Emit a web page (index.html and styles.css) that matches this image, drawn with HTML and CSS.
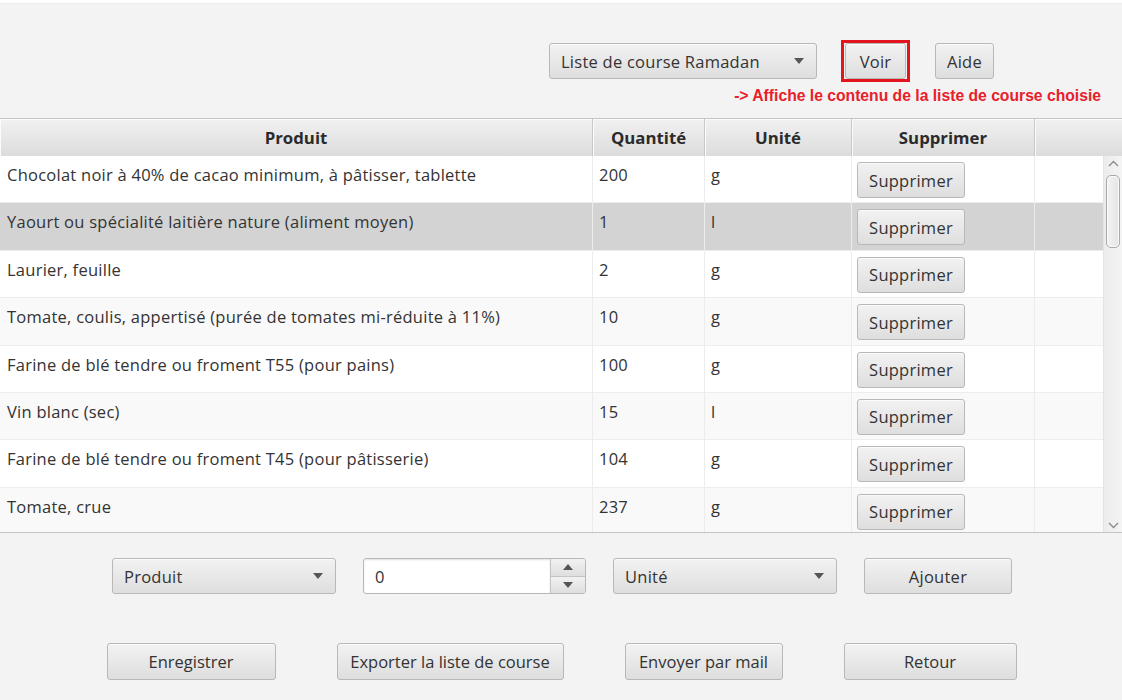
FILE: index.html
```html
<!DOCTYPE html>
<html lang="fr">
<head>
<meta charset="utf-8">
<title>Liste de course</title>
<link rel="stylesheet" href="styles.css">
</head>
<body>
<div class="app">
  <header class="top">
    <div class="top-controls">
      <div class="combo combo-liste"><span class="combo-label">Liste de course Ramadan</span><span class="arrow"></span></div>
      <div class="highlight"><button class="btn btn-voir">Voir</button></div>
      <button class="btn btn-aide">Aide</button>
    </div>
    <div class="hint">-&gt; Affiche le contenu de la liste de course choisie</div>
  </header>

  <section class="table">
    <div class="thead">
      <div class="th c-prod">Produit</div>
      <div class="th c-qty">Quantité</div>
      <div class="th c-unit">Unité</div>
      <div class="th c-del">Supprimer</div>
      <div class="th c-fill"></div>
    </div>
    <div class="tbody">
      <div class="rows">
        <div class="row">
          <div class="td c-prod">Chocolat noir à 40% de cacao minimum, à pâtisser, tablette</div>
          <div class="td c-qty">200</div>
          <div class="td c-unit">g</div>
          <div class="td c-del"><button class="btn btn-del">Supprimer</button></div>
          <div class="td c-fill2"></div>
        </div>
        <div class="row selected">
          <div class="td c-prod">Yaourt ou spécialité laitière nature (aliment moyen)</div>
          <div class="td c-qty">1</div>
          <div class="td c-unit">l</div>
          <div class="td c-del"><button class="btn btn-del">Supprimer</button></div>
          <div class="td c-fill2"></div>
        </div>
        <div class="row">
          <div class="td c-prod">Laurier, feuille</div>
          <div class="td c-qty">2</div>
          <div class="td c-unit">g</div>
          <div class="td c-del"><button class="btn btn-del">Supprimer</button></div>
          <div class="td c-fill2"></div>
        </div>
        <div class="row odd">
          <div class="td c-prod">Tomate, coulis, appertisé (purée de tomates mi-réduite à 11%)</div>
          <div class="td c-qty">10</div>
          <div class="td c-unit">g</div>
          <div class="td c-del"><button class="btn btn-del">Supprimer</button></div>
          <div class="td c-fill2"></div>
        </div>
        <div class="row">
          <div class="td c-prod">Farine de blé tendre ou froment T55 (pour pains)</div>
          <div class="td c-qty">100</div>
          <div class="td c-unit">g</div>
          <div class="td c-del"><button class="btn btn-del">Supprimer</button></div>
          <div class="td c-fill2"></div>
        </div>
        <div class="row odd">
          <div class="td c-prod">Vin blanc (sec)</div>
          <div class="td c-qty">15</div>
          <div class="td c-unit">l</div>
          <div class="td c-del"><button class="btn btn-del">Supprimer</button></div>
          <div class="td c-fill2"></div>
        </div>
        <div class="row">
          <div class="td c-prod">Farine de blé tendre ou froment T45 (pour pâtisserie)</div>
          <div class="td c-qty">104</div>
          <div class="td c-unit">g</div>
          <div class="td c-del"><button class="btn btn-del">Supprimer</button></div>
          <div class="td c-fill2"></div>
        </div>
        <div class="row odd">
          <div class="td c-prod">Tomate, crue</div>
          <div class="td c-qty">237</div>
          <div class="td c-unit">g</div>
          <div class="td c-del"><button class="btn btn-del">Supprimer</button></div>
          <div class="td c-fill2"></div>
        </div>
      </div>
      <div class="scrollbar">
        <svg class="sb-arrow" width="11" height="7" viewBox="0 0 11 7"><path d="M1 6 L5.5 1.5 L10 6" fill="none" stroke="#8a8a8a" stroke-width="1.3"/></svg>
        <div class="sb-track"><div class="sb-thumb"></div></div>
        <svg class="sb-arrow" width="11" height="7" viewBox="0 0 11 7"><path d="M1 1 L5.5 5.5 L10 1" fill="none" stroke="#8a8a8a" stroke-width="1.3"/></svg>
      </div>
    </div>
  </section>

  <section class="add-row">
    <div class="combo combo-add"><span class="combo-label">Produit</span><span class="arrow"></span></div>
    <div class="spinner">
      <div class="spin-input">0</div>
      <div class="spin-btns">
        <div class="spin-btn"><span class="arrow-up"></span></div>
        <div class="spin-btn"><span class="arrow"></span></div>
      </div>
    </div>
    <div class="combo combo-add"><span class="combo-label">Unité</span><span class="arrow"></span></div>
    <button class="btn btn-ajouter">Ajouter</button>
  </section>

  <section class="action-row">
    <button class="btn btn-act w-enr">Enregistrer</button>
    <button class="btn btn-act w-exp">Exporter la liste de course</button>
    <button class="btn btn-act w-env">Envoyer par mail</button>
    <button class="btn btn-act w-ret">Retour</button>
  </section>
</div>
</body>
</html>
```

FILE: styles.css
```css
* { box-sizing: border-box; }

html, body {
  margin: 0;
  padding: 0;
  background: #f3f3f3;
}

body {
  font-family: "Open Sans", "Noto Sans", "Liberation Sans", sans-serif;
  font-size: 16.5px;
  letter-spacing: 0.25px;
  color: #333333;
  width: 1122px;
  height: 700px;
  overflow: hidden;
}

.app {
  border-top: 3px solid #ffffff;
  height: 700px;
  display: flex;
  flex-direction: column;
}

/* ---------- top ---------- */
.top {
  height: 115px;
  display: flex;
  flex-direction: column;
  align-items: flex-end;
  padding-top: 36px;
  border-top: 1px solid #ececec;
}

.top-controls {
  display: flex;
  align-items: center;
  padding-right: 128px;
}

.btn {
  font-family: inherit;
  font-size: 16.5px;
  letter-spacing: 0.25px;
  color: #333333;
  height: 36px;
  border: 1px solid #b8b8b8;
  border-radius: 3px;
  background: linear-gradient(#f2f2f2, #dedede);
  box-shadow: inset 0 1px 0 #fafafa;
  padding: 0 8px;
  display: inline-flex;
  align-items: center;
  justify-content: center;
  cursor: default;
  white-space: nowrap;
}

.combo {
  height: 36px;
  border: 1px solid #b8b8b8;
  border-radius: 3px;
  background: linear-gradient(#f2f2f2, #dedede);
  box-shadow: inset 0 1px 0 #fafafa;
  display: flex;
  align-items: center;
  justify-content: space-between;
  padding: 0 12px 0 11px;
}

.combo-liste { width: 268px; }

.arrow {
  width: 0;
  height: 0;
  border-left: 5.5px solid transparent;
  border-right: 5.5px solid transparent;
  border-top: 6px solid #555555;
}

.arrow-up {
  width: 0;
  height: 0;
  border-left: 5.5px solid transparent;
  border-right: 5.5px solid transparent;
  border-bottom: 6px solid #555555;
}

.highlight {
  margin-left: 24px;
  border: 3px solid #e4141f;
  padding: 0 1px;
  display: flex;
}

.btn-voir { width: 61px; height: 36px; }

.btn-aide { width: 59px; margin-left: 25px; }

.hint {
  margin-top: 5px;
  padding-right: 21px;
  font-family: "Liberation Sans", Arial, sans-serif;
  font-weight: bold;
  font-size: 15.7px;
  letter-spacing: 0;
  color: #e8202a;
}

/* ---------- table ---------- */
.table {
  border-top: 1px solid #c4c4c4;
  border-bottom: 1px solid #c4c4c4;
  background: #ffffff;
}

.thead {
  display: flex;
  height: 37px;
  background: linear-gradient(#f1f1f1, #dcdcdc);
}

.th {
  font-weight: bold;
  font-size: 16.8px;
  letter-spacing: 0;
  color: #2b2b2b;
  display: flex;
  align-items: center;
  justify-content: center;
  border-right: 1px solid #c8c8c8;
  box-shadow: inset 1px 1px 0 #fbfbfb;
}

.c-prod { width: 593px; }
.c-qty { width: 112px; }
.c-unit { width: 147px; }
.c-del { width: 183px; }
.c-fill { flex: 1; border-right: none; }
.c-fill2 { flex: 1; }

.tbody {
  display: flex;
  height: 376px;
  overflow: hidden;
}

.rows {
  flex: 1;
  display: flex;
  flex-direction: column;
}

.row {
  display: flex;
  height: 47.4px;
  flex: none;
  background: #ffffff;
  border-bottom: 1px solid #ededed;
}

.row.odd { background: #f9f9f9; }
.row.selected { background: #d3d3d3; }

.td {
  border-right: 1px solid #ececec;
  padding: 7px 7px 0 7px;
  color: #333333;
  white-space: nowrap;
  overflow: hidden;
}

.td.c-qty, .td.c-unit { padding-left: 6px; }

.td.c-fill2 { border-right: none; }

.td.c-del { padding: 6px 0 0 5px; }

.btn-del {
  width: 108px;
  height: 36px;
}

/* scrollbar */
.scrollbar {
  width: 19px;
  background: linear-gradient(90deg, #ececec, #f4f4f4);
  border-left: 1px solid #e4e4e4;
  display: flex;
  flex-direction: column;
  align-items: center;
  padding: 4px 0 3px;
}

.sb-arrow { flex: none; }

.sb-track {
  flex: 1;
  width: 100%;
  padding: 8px 2px 0;
}

.sb-thumb {
  height: 73px;
  border: 1px solid #a9a9a9;
  border-radius: 5px;
  background: linear-gradient(90deg, #f4f4f4, #e4e4e4);
  box-shadow: inset 0 0 0 1px #fafafa;
}

/* ---------- add row ---------- */
.add-row {
  display: flex;
  justify-content: center;
  gap: 27px;
  margin-top: 25px;
  padding-left: 2px;
}

.combo-add { width: 224px; }

.spinner {
  width: 223px;
  height: 36px;
  display: flex;
  border: 1px solid #b8b8b8;
  border-radius: 3px;
  background: #ffffff;
  overflow: hidden;
}

.spin-input {
  flex: 1;
  display: flex;
  align-items: center;
  padding-left: 11px;
  box-shadow: inset 0 1px 2px #e0e0e0;
}

.spin-btns {
  width: 35px;
  display: flex;
  flex-direction: column;
  border-left: 1px solid #c4c4c4;
}

.spin-btn {
  flex: 1;
  display: flex;
  align-items: center;
  justify-content: center;
  background: linear-gradient(#f2f2f2, #dedede);
}

.spin-btn + .spin-btn { border-top: 1px solid #c4c4c4; }

.btn-ajouter { width: 148px; }

/* ---------- action row ---------- */
.action-row {
  display: flex;
  justify-content: center;
  gap: 61px;
  margin-top: 49px;
  padding-left: 1px;
}

.btn-act {
  height: 37px;
  letter-spacing: 0;
}

.w-enr { width: 169px; }
.w-exp { width: 227px; }
.w-env { width: 158px; }
.w-ret { width: 173px; }
```
